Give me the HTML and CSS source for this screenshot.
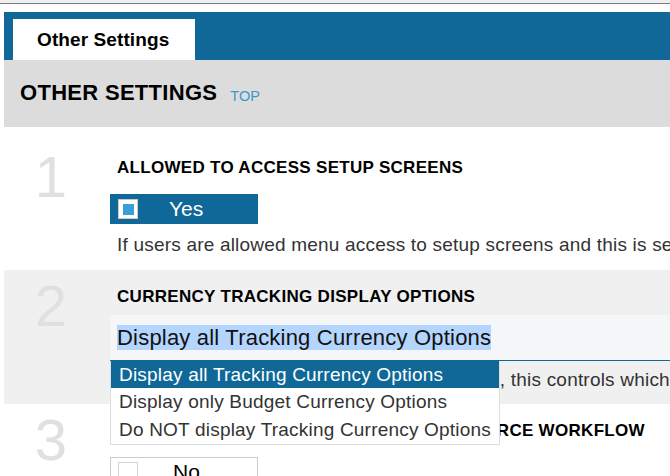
FILE: index.html
```html
<!DOCTYPE html>
<html>
<head>
<meta charset="utf-8">
<link rel="stylesheet" href="styles.css">
</head>
<body>
<div class="chrome"></div>
<div class="page">
  <div class="tabbar"><div class="tab">Other Settings</div></div>
  <div class="panel-head"><h1>OTHER SETTINGS</h1><a class="top">TOP</a></div>

  <div class="section first">
    <div class="num">1</div>
    <div class="content">
      <h2>ALLOWED TO ACCESS SETUP SCREENS</h2>
      <div class="toggle on"><span class="box"></span><span class="label">Yes</span></div>
      <p class="desc">If users are allowed menu access to setup screens and this is set to Yes, they can change system settings.</p>
    </div>
  </div>

  <div class="section shaded">
    <div class="num">2</div>
    <div class="content">
      <h2>CURRENCY TRACKING DISPLAY OPTIONS</h2>
      <div class="select">
        <span class="selected">Display all Tracking Currency Options</span>
        <ul class="options">
          <li class="active">Display all Tracking Currency Options</li>
          <li>Display only Budget Currency Options</li>
          <li>Do NOT display Tracking Currency Options</li>
        </ul>
      </div>
      <p class="desc">If multiple currencies are tracked on budgets, this controls which currencies are shown.</p>
    </div>
  </div>

  <div class="section">
    <div class="num">3</div>
    <div class="content">
      <h2>ALLOW BUDGET APPROVER TO ALSO ENFORCE WORKFLOW</h2>
      <div class="toggle off"><span class="box"></span><span class="label">No</span></div>
    </div>
  </div>
</div>
</body>
</html>
```

FILE: styles.css
```css
html, body {
  margin: 0;
  padding: 0;
  background: #ffffff;
  overflow: hidden;
  font-family: "Liberation Sans", Arial, sans-serif;
  color: #000;
}

.chrome {
  height: 3px;
  background: #efefef;
  border-bottom: 1px solid #7a7a7a;
}

.page {
  margin-left: 4px;
  padding-top: 8px;
  width: 900px;
}

.tabbar {
  background: #0f6897;
  height: 48px;
  padding: 7px 0 0 9px;
  box-sizing: border-box;
  display: flex;
  align-items: flex-end;
}

.tab {
  background: #fff;
  width: 182px;
  height: 41px;
  box-sizing: border-box;
  padding-left: 24px;
  font-weight: bold;
  font-size: 19px;
  letter-spacing: 0.1px;
  line-height: 41px;
}

.panel-head {
  background: #dcdcdc;
  height: 67px;
  display: flex;
  align-items: center;
  padding-left: 16px;
  gap: 13px;
}

.panel-head h1 {
  margin: 0;
  font-size: 22px;
  letter-spacing: 0.3px;
  font-weight: bold;
  padding-bottom: 2px;
}

.top {
  color: #3a98cf;
  font-size: 14.5px;
  padding-top: 4px;
}

.section {
  display: grid;
  grid-template-columns: 94px 1fr;
  column-gap: 12px;
  padding: 17px 0 13px 0;
}

.section.first {
  padding-top: 31px;
  padding-bottom: 14px;
}

.section.shaded {
  background: #f0f0f0;
}

.num {
  font-size: 58px;
  line-height: 58px;
  color: #e0e0e0;
  text-align: center;
  margin-top: -10px;
}

.content h2 {
  margin: 0 0 16px 7px;
  font-size: 17px;
  letter-spacing: 0.3px;
  line-height: 20px;
  font-weight: bold;
  white-space: nowrap;
}

.shaded .content h2 {
  margin-bottom: 8px;
}

.toggle {
  width: 148px;
  height: 30px;
  box-sizing: border-box;
  display: flex;
  align-items: center;
  padding-left: 8px;
}

.toggle.on {
  background: #0f6897;
  color: #fff;
}

.toggle.off {
  background: #fff;
  border: 1px solid #cccccc;
  padding-left: 7px;
}

.toggle .box {
  width: 20px;
  height: 20px;
  box-sizing: border-box;
  border: 1px solid #c8c8c8;
  background: #fff;
  display: flex;
  align-items: center;
  justify-content: center;
}

.toggle.on .box::after {
  content: "";
  width: 11px;
  height: 11px;
  background: #3a9fd8;
}

.toggle.off .box {
  border-color: #d6d6d6;
}

.toggle .label {
  font-size: 21px;
  margin-left: 31px;
}

.toggle.off .label {
  margin-left: 35px;
}

.desc {
  margin: 10px 0 0 7px;
  font-size: 19px;
  letter-spacing: 0.2px;
  line-height: 22px;
  color: #333;
  white-space: nowrap;
}

.shaded .desc {
  margin-top: 8px;
}

.select {
  position: relative;
  height: 45px;
  background: #f5f6f8;
  border-bottom: 1px solid #0f6897;
  display: flex;
  align-items: center;
  padding-left: 7px;
}

.selected {
  display: inline-block;
  background: #b4d5fe;
  font-size: 22px;
  letter-spacing: 0.2px;
  line-height: 25px;
  color: #111;
}

.options {
  position: absolute;
  top: 46px;
  left: 0;
  width: 390px;
  margin: 0;
  padding: 0;
  list-style: none;
  background: #fff;
  border: 1px solid #dddddd;
  border-top: none;
  box-sizing: border-box;
  z-index: 2;
}

.options li {
  height: 28px;
  line-height: 28px;
  padding-left: 8px;
  font-size: 19px;
  letter-spacing: 0.2px;
  color: #333;
  white-space: nowrap;
}

.options li.active {
  background: #0f6897;
  color: #fff;
  height: 27px;
  line-height: 27px;
}
```
